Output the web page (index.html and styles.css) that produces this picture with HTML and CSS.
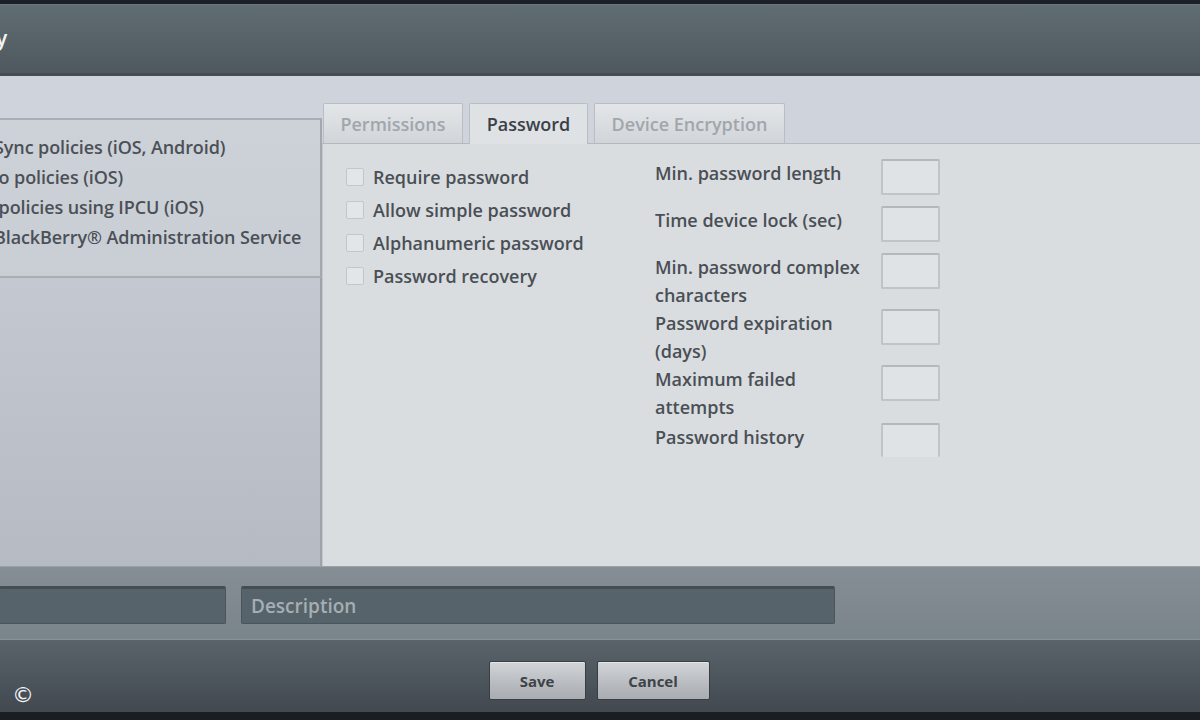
FILE: index.html
```html
<!DOCTYPE html>
<html>
<head>
<meta charset="utf-8">
<link rel="stylesheet" href="styles.css">
</head>
<body>
<div class="app">
  <div class="top-strip"></div>
  <header class="titlebar"><span class="title">y</span></header>
  <div class="main">
    <aside class="sidebar">
      <ul class="listbox">
        <li>Sync policies (iOS, Android)</li>
        <li>&nbsp;o policies (iOS)</li>
        <li>&nbsp;policies using IPCU (iOS)</li>
        <li>BlackBerry® Administration Service</li>
      </ul>
      <div class="sidebar-rest"></div>
    </aside>
    <section class="content">
      <nav class="tabs">
        <div class="tab tab-perm">Permissions</div>
        <div class="tab tab-pass active">Password</div>
        <div class="tab tab-enc">Device Encryption</div>
      </nav>
      <div class="panel">
        <div class="checks">
          <label class="check"><span class="box"></span>Require password</label>
          <label class="check"><span class="box"></span>Allow simple password</label>
          <label class="check"><span class="box"></span>Alphanumeric password</label>
          <label class="check"><span class="box"></span>Password recovery</label>
        </div>
        <div class="fields">
          <div class="field"><span class="flabel">Min. password length</span><span class="finput"></span></div>
          <div class="field"><span class="flabel">Time device lock (sec)</span><span class="finput"></span></div>
          <div class="field two"><span class="flabel">Min. password complex characters</span><span class="finput"></span></div>
          <div class="field two"><span class="flabel">Password expiration (days)</span><span class="finput"></span></div>
          <div class="field two"><span class="flabel">Maximum failed attempts</span><span class="finput"></span></div>
          <div class="field"><span class="flabel">Password history</span><span class="finput last"></span></div>
        </div>
      </div>
    </section>
  </div>
  <div class="bottombar">
    <div class="tinput name"></div>
    <div class="tinput desc">Description</div>
  </div>
  <footer class="footer">
    <span class="copy">©</span>
    <div class="buttons">
      <button class="btn save">Save</button>
      <button class="btn cancel">Cancel</button>
    </div>
  </footer>
  <div class="bottom-strip"></div>
</div>
</body>
</html>
```

FILE: styles.css
```css
* { box-sizing: border-box; }
html, body { margin: 0; padding: 0; }
body {
  width: 1200px;
  height: 720px;
  overflow: hidden;
  font-family: "Open Sans", "Lato", sans-serif;
  font-weight: 600;
  background: #1c1f25;
}
.app { display: flex; flex-direction: column; width: 1200px; height: 720px; }

.top-strip { height: 4px; background: #1d2027; }

.titlebar {
  height: 72px;
  background: linear-gradient(#606d73, #566067 60%, #4f585f);
  border-top: 1px solid #6b777d;
  border-bottom: 3px solid #454c52;
  box-shadow: 0 1px 0 #b3b8be;
  display: flex;
  align-items: center;
  overflow: hidden;
}
.title {
  color: #f2f4f5;
  font-size: 21px;
  margin-left: -4px;
  margin-top: -2px;
}

.main { height: 490px; display: flex; background: #cfd4dc; }

.sidebar {
  width: 322px;
  padding-top: 42px;
  display: flex;
  flex-direction: column;
  overflow: hidden;
}
.listbox {
  list-style: none;
  margin: 0;
  padding: 12px 0 0 0;
  height: 160px;
  background: linear-gradient(#cdd2d9, #c9ced5);
  border-top: 2px solid #a9aeb5;
  border-bottom: 2px solid #a9aeb5;
  border-right: 2px solid #a3a8ae;
  box-shadow: 0 1px 0 #d8dce2;
  margin-left: -6px;
}
.listbox li {
  height: 30px;
  line-height: 30px;
  font-size: 18px;
  color: #4b5056;
  white-space: nowrap;
  letter-spacing: -0.1px;
}
.sidebar-rest {
  flex: 1;
  background: linear-gradient(#c4c9d1, #b6bbc3);
  border-right: 2px solid #9ea3a9;
}

.content {
  flex: 1;
  display: flex;
  flex-direction: column;
  padding-top: 27px;
}
.tabs {
  height: 41px;
  display: flex;
  gap: 6px;
  padding-left: 1px;
  border-bottom: 1px solid #b4b9bf;
}
.tab {
  display: flex;
  align-items: center;
  justify-content: center;
  font-size: 18px;
  color: #a1a6ac;
  background: linear-gradient(#e3e6e9, #d1d5d9);
  border: 1px solid #b9bec4;
  border-bottom: none;
  border-radius: 2px 2px 0 0;
  white-space: nowrap;
}
.tab-perm { width: 140px; }
.tab-pass { width: 119px; }
.tab-enc { width: 191px; }
.tab.active {
  color: #3b4046;
  background: #dee2e5;
  margin-bottom: -1px;
}

.panel {
  flex: 1;
  background: #d9dde0;
  border-left: 1px solid #c4c8cc;
  display: flex;
  padding: 16px 0 0 23px;
}
.checks { width: 309px; display: flex; flex-direction: column; }
.check {
  height: 33px;
  display: flex;
  align-items: center;
  gap: 9px;
  font-size: 18px;
  color: #4a4f55;
  white-space: nowrap;
}
.box {
  width: 18px;
  height: 18px;
  flex: none;
  background: #e3e6e9;
  border: 1px solid #c3c7cb;
  border-radius: 2px;
}

.fields { display: flex; flex-direction: column; margin-top: -1px; }
.field {
  display: flex;
  align-items: flex-start;
  min-height: 47px;
}
.field.two { min-height: 55px; }
.field:last-child { margin-top: 2px; }
.flabel {
  width: 226px;
  padding-right: 10px;
  line-height: 27.5px;
  font-size: 18px;
  color: #4a4f55;
  padding-top: 1px;
}
.finput {
  width: 59px;
  height: 36px;
  flex: none;
  background: #e0e3e6;
  border: 2px solid #c0c4c8;
  border-top-color: #b4b8bd;
  border-radius: 2px;
}
.finput.last { height: 34px; border-bottom: none; }

.bottombar {
  height: 74px;
  background: linear-gradient(#868e95, #7a848b);
  border-top: 1px solid #9ba1a7;
  display: flex;
  align-items: center;
  gap: 15px;
  padding-top: 4px;
  border-bottom: 1px solid #8a9297;
}
.tinput {
  height: 38px;
  background: #56636a;
  border: 1px solid #4a545b;
  border-top: 3px solid #444d54;
  border-radius: 2px;
  color: #a6aeb4;
  font-size: 19px;
  font-weight: 600;
  display: flex;
  align-items: center;
  padding-left: 9px;
}
.tinput.name { width: 227px; margin-left: -1px; }
.tinput.desc { width: 594px; }

.footer {
  height: 72px;
  background: linear-gradient(#5a636a, #4b535b 60%, #42494f);
  display: flex;
  align-items: center;
  justify-content: center;
  position: relative;
}
.copy {
  position: absolute;
  left: 12px;
  top: 42px;
  color: #f4f5f6;
  font-size: 22px;
  font-family: "DejaVu Sans", sans-serif;
  font-weight: 400;
}
.buttons { display: flex; gap: 11px; margin-top: 9px; margin-left: -2px; }
.btn {
  height: 39px;
  font-family: "Open Sans", sans-serif;
  font-weight: 700;
  font-size: 15px;
  color: #3e4348;
  background: linear-gradient(#d2d5d8, #b7bbbf 60%, #a9adb1);
  border: 1px solid #383e44;
  border-radius: 2px;
  box-shadow: inset 0 1px 0 #e4e6e8;
  padding: 0;
}
.btn.save { width: 97px; }
.btn.cancel { width: 113px; }

.bottom-strip { height: 8px; background: #1a1d22; }
```
